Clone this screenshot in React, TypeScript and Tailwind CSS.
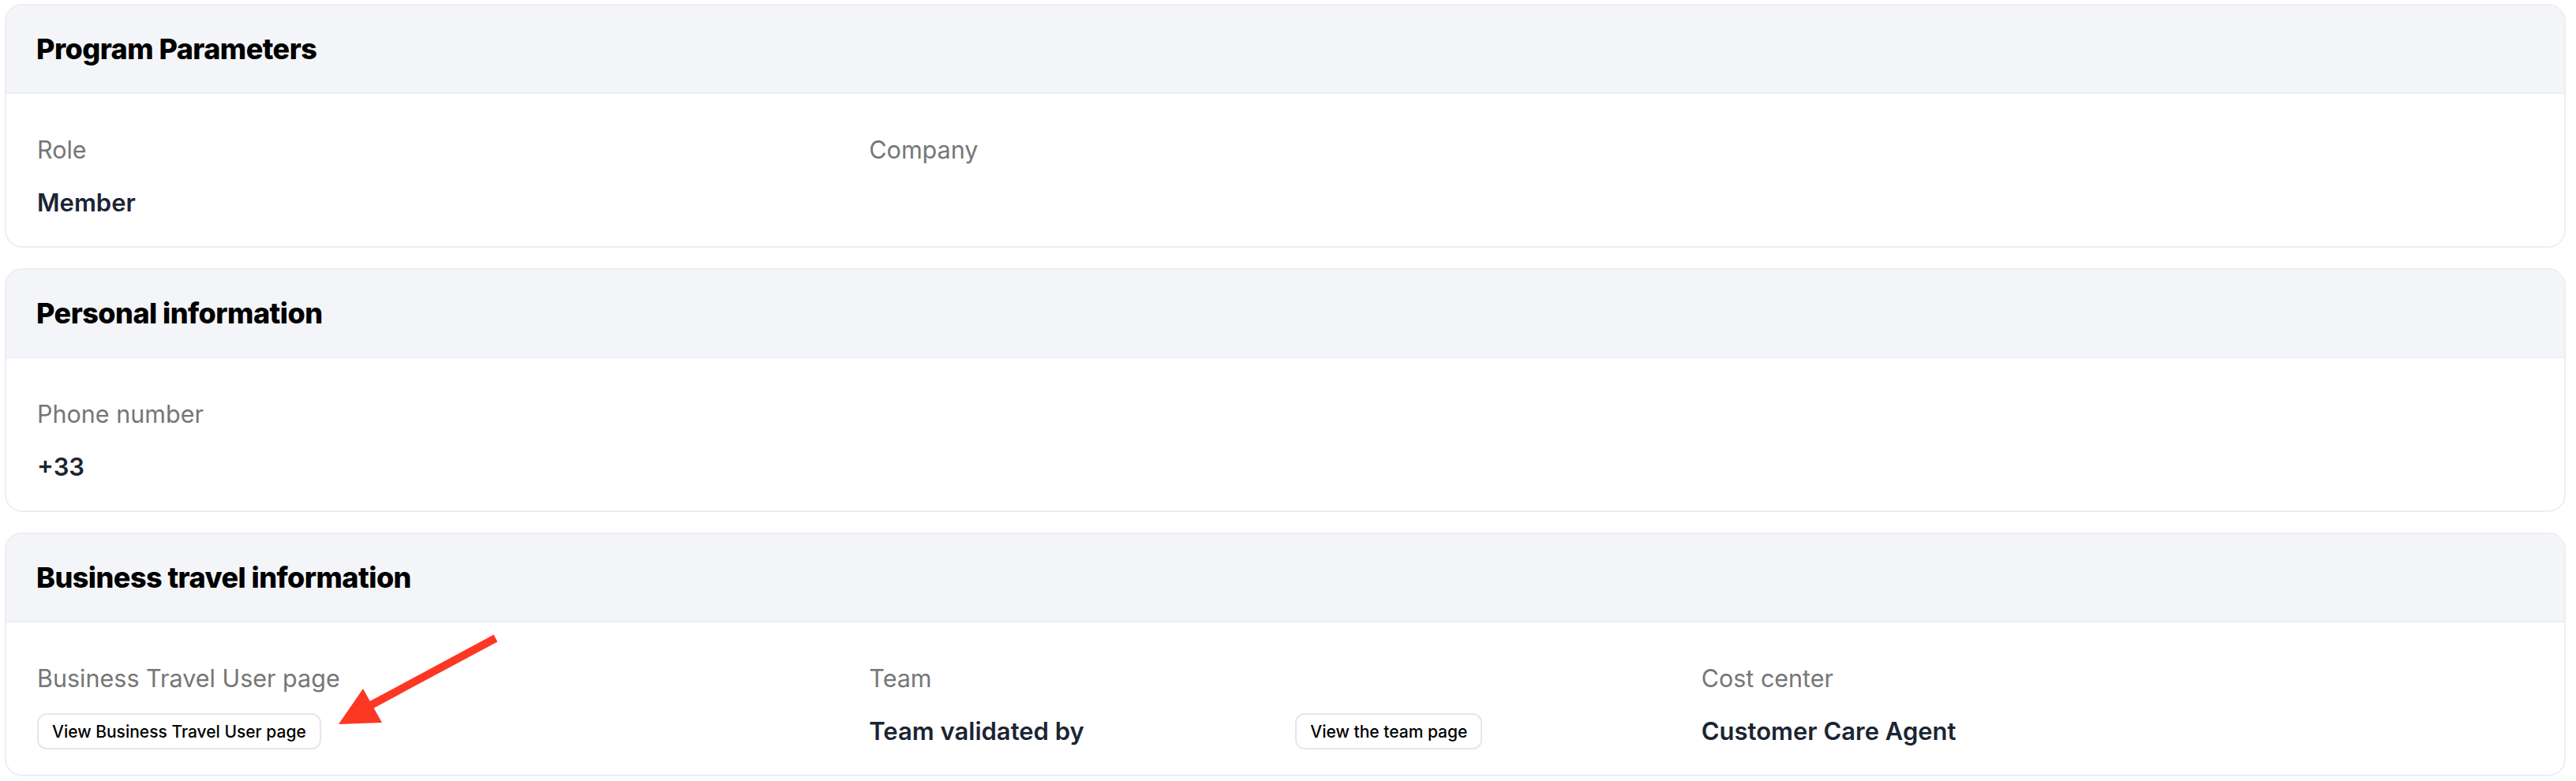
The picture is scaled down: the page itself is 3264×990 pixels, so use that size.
import type { ReactNode } from "react";

type Field = {
  label: string;
  value?: string;
  action?: string;
  valueAction?: string;
};

function ActionButton({ children }: { children: ReactNode }) {
  return (
    <button
      type="button"
      className="h-[46px] shrink-0 rounded-[12px] border-2 border-[#e7e7e7] bg-white px-[17px] text-[21px] font-medium leading-none text-black"
    >
      {children}
    </button>
  );
}

function InfoCard({ title, fields }: { title: string; fields: Field[] }) {
  return (
    <section className="overflow-hidden rounded-[22px] border-2 border-[#eceef3] bg-white">
      <header className="flex h-[112px] items-center border-b-2 border-[#eceef3] bg-[#f4f5f9] px-[38px]">
        <h2 className="text-[36px] font-extrabold leading-[44px] tracking-[-0.015em] text-black">
          {title}
        </h2>
      </header>
      <div className="grid grid-cols-3 px-[39px] pb-[37px] pt-[53px]">
        {fields.map((f) => (
          <div key={f.label} className="flex flex-col">
            <span className="mb-[31px] text-[30.5px] leading-[36px] text-[#767676]">
              {f.label}
            </span>
            <div className="flex h-9 items-center">
              {f.action && <ActionButton>{f.action}</ActionButton>}
              {f.value && (
                <span className="w-[540px] shrink-0 text-[31px] font-semibold leading-[36px] text-[#1a2533]">
                  {f.value}
                </span>
              )}
              {f.valueAction && <ActionButton>{f.valueAction}</ActionButton>}
            </div>
          </div>
        ))}
      </div>
    </section>
  );
}

export default function App() {
  return (
    <div
      className="relative min-h-[990px] bg-white pl-[6px] pr-[13px] pt-[5px]"
      style={{ fontFamily: "Inter, 'Noto Sans', sans-serif" }}
    >
      <div className="flex flex-col gap-[26px]">
        <InfoCard
          title="Program Parameters"
          fields={[
            { label: "Role", value: "Member" },
            { label: "Company" },
          ]}
        />
        <InfoCard
          title="Personal information"
          fields={[{ label: "Phone number", value: "+33" }]}
        />
        <InfoCard
          title="Business travel information"
          fields={[
            {
              label: "Business Travel User page",
              action: "View Business Travel User page",
            },
            {
              label: "Team",
              value: "Team validated by",
              valueAction: "View the team page",
            },
            { label: "Cost center", value: "Customer Care Agent" },
          ]}
        />
      </div>

      {/* annotation arrow */}
      <svg
        className="pointer-events-none absolute left-0 top-0"
        width="3264"
        height="990"
        viewBox="0 0 3264 990"
      >
        <line
          x1="628"
          y1="809"
          x2="466"
          y2="896"
          stroke="#fc3723"
          strokeWidth="10"
        />
        <polygon points="429,918 460,873 484,916" fill="#fc3723" />
      </svg>
    </div>
  );
}
